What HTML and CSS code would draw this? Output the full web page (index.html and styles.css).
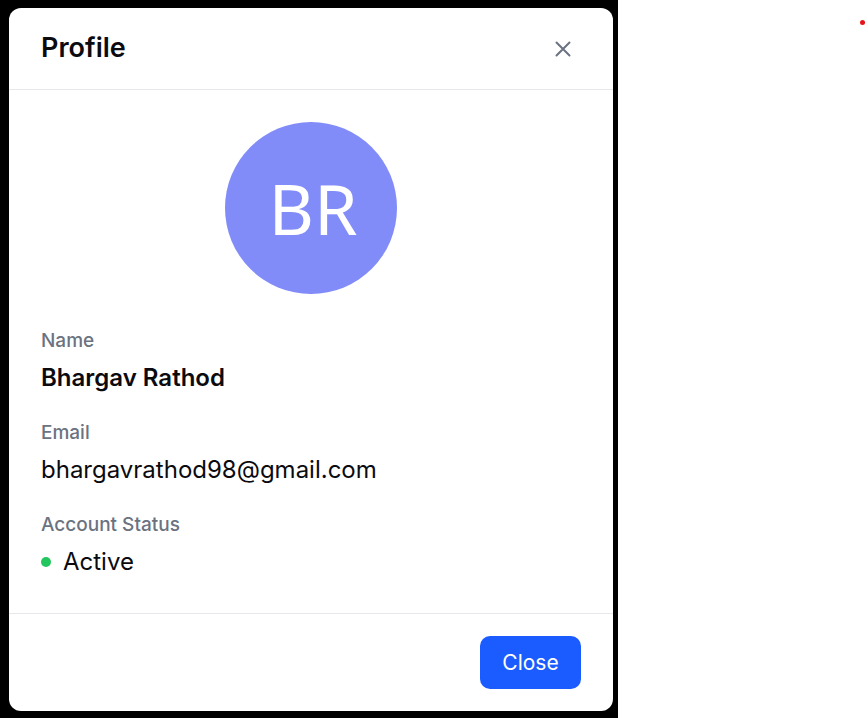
FILE: index.html
```html
<!DOCTYPE html>
<html lang="en">
<head>
<meta charset="utf-8">
<title>Profile</title>
<link rel="stylesheet" href="styles.css">
</head>
<body>
<div class="page">
  <div class="backdrop">
    <div class="modal" role="dialog" aria-labelledby="profile-title">
      <header class="modal-header">
        <h2 id="profile-title" class="modal-title">Profile</h2>
        <button class="icon-btn" type="button" aria-label="Close">
          <svg width="16" height="16" viewBox="0 0 16 16" fill="none" stroke="currentColor" stroke-width="2" stroke-linecap="round">
            <path d="M1.5 1.5 L14.5 14.5 M14.5 1.5 L1.5 14.5"/>
          </svg>
        </button>
      </header>
      <section class="modal-body">
        <div class="avatar-wrap">
          <div class="avatar">BR</div>
        </div>
        <div class="field">
          <div class="field-label">Name</div>
          <div class="field-value strong">Bhargav Rathod</div>
        </div>
        <div class="field">
          <div class="field-label">Email</div>
          <div class="field-value">bhargavrathod98@gmail.com</div>
        </div>
        <div class="field">
          <div class="field-label">Account Status</div>
          <div class="field-value status"><span class="dot"></span>Active</div>
        </div>
      </section>
      <footer class="modal-footer">
        <button class="btn-primary" type="button">Close</button>
      </footer>
    </div>
  </div>
  <span class="notify-dot"></span>
</div>
</body>
</html>
```
FILE: styles.css
```css
* { box-sizing: border-box; }
html, body { margin: 0; padding: 0; }
body {
  background: #ffffff;
  font-family: Inter, "Liberation Sans", sans-serif;
  color: #0b0b0f;
}
.page {
  position: relative;
  width: 868px;
  height: 718px;
}
.backdrop {
  width: 618px;
  height: 718px;
  background: #000000;
  padding: 8px 5px 0 9px;
}
.modal {
  width: 604px;
  height: 703px;
  background: #ffffff;
  border-radius: 12px;
  display: flex;
  flex-direction: column;
  overflow: hidden;
}
.modal-header {
  height: 82px;
  flex: none;
  display: flex;
  align-items: center;
  justify-content: space-between;
  padding: 0 34px 0 32px;
  border-bottom: 1px solid #e5e7eb;
}
.modal-title {
  margin: 0;
  font-size: 27px;
  font-weight: 600;
  line-height: 32px;
  color: #0b0b0f;
  position: relative;
  top: -1px;
}
.icon-btn {
  border: 0;
  background: transparent;
  padding: 8px;
  margin: 0;
  color: #6b7280;
  display: flex;
  cursor: pointer;
}
.modal-body {
  flex: 1;
  padding: 32px 32px 0;
}
.avatar-wrap {
  display: flex;
  justify-content: center;
  margin-bottom: 34px;
}
.avatar {
  width: 172px;
  height: 172px;
  border-radius: 50%;
  background: #818cf8;
  color: #ffffff;
  display: flex;
  align-items: center;
  justify-content: center;
  padding-left: 4px;
  font-family: "Noto Sans", "Open Sans", sans-serif;
  font-size: 70px;
  font-weight: 400;
  line-height: 1;
}
.field + .field { margin-top: 26px; }
.field-label {
  font-size: 19px;
  line-height: 24px;
  font-weight: 500;
  color: #6b7280;
  position: relative;
  top: 1px;
}
.field-value {
  margin-top: 10px;
  font-size: 24px;
  line-height: 32px;
  color: #0b0b0f;
}
.field-value.strong {
  font-weight: 600;
}
.status {
  display: flex;
  align-items: center;
  gap: 12px;
}
.dot {
  width: 10px;
  height: 10px;
  border-radius: 50%;
  background: #22c55e;
}
.modal-footer {
  flex: none;
  border-top: 1px solid #e5e7eb;
  display: flex;
  justify-content: flex-end;
  padding: 22px 32px 22px;
}
.btn-primary {
  width: 101px;
  height: 53px;
  border: 0;
  border-radius: 10px;
  background: #1a5cff;
  color: #ffffff;
  font-family: Inter, "Liberation Sans", sans-serif;
  font-size: 21px;
  font-weight: 400;
  cursor: pointer;
}
.notify-dot {
  position: absolute;
  left: 860px;
  top: 20px;
  width: 5px;
  height: 5px;
  border-radius: 50%;
  background: #e5141b;
}
```
